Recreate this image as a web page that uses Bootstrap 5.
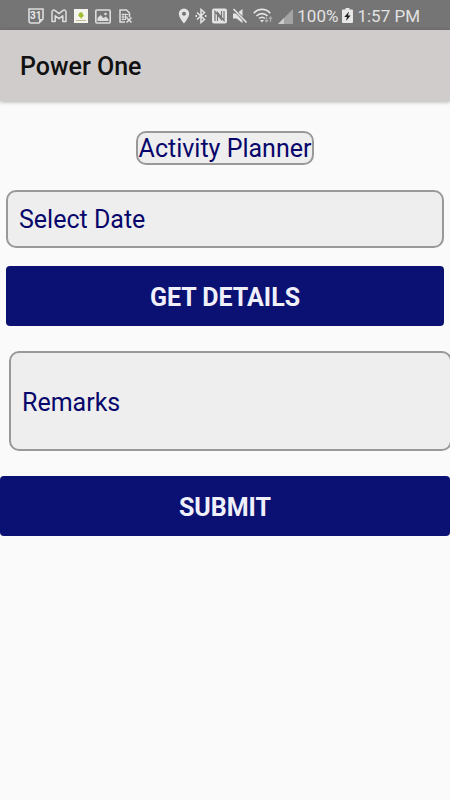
<!DOCTYPE html>
<html lang="en">
<head>
<meta charset="utf-8">
<meta name="viewport" content="width=device-width, initial-scale=1">
<title>Power One</title>
<link href="https://cdn.jsdelivr.net/npm/bootstrap@5.3.0/dist/css/bootstrap.min.css" rel="stylesheet">
<style>
body { font-family: Roboto, "Liberation Sans", sans-serif; background: #fafafa; overflow-x: hidden; }
.status-bar { height: 30px; background: #757575; color: #e2e2e2; padding: 2px 30px 0 28px; font-size: 17px; line-height: 28px; }
.status-bar svg { display: block; flex: none; }
.notices { gap: 7px; }
.system { gap: 5px; }
.readout { gap: 4px; }
.app-bar { height: 71px; background: #d0cccb; padding: 2px 20px 0; box-shadow: 0 1px 4px rgba(0,0,0,.3); }
.app-title { font-size: 25px; font-weight: 500; line-height: 32px; color: #111; }
.planner { padding-top: 30px; }
.outlined, .outlined:focus { border: 2px solid #999; border-radius: 10px; background: #eee; color: #07076b; font-size: 25px; }
.outlined::placeholder { color: #07076b; opacity: 1; }
.heading-tag { line-height: 28px; padding: 2px 1px 0; margin-bottom: 25px; }
.inset { margin: 0 6px; }
.date-box { height: 58px; padding: 0 11px; }
.remarks-wrap { margin: 25px -2px 25px 9px; }
.remarks-box { height: 100px; padding: 2px 11px 0; }
.action, .action:hover { height: 60px; border: 0; border-radius: 4px; background: #0a1172; color: #f0f0fb; font-size: 25px; font-weight: 700; padding: 4px 12px 0; }
.action-top { margin-top: 18px; }
</style>
</head>
<body>
<div class="status-bar d-flex justify-content-between align-items-center">
  <div class="notices d-flex align-items-center">
    <svg width="16" height="16" viewBox="0 0 16 16"><path d="M1 1h14v10l-4 4H3a2 2 0 0 1-2-2z" fill="none" stroke="#ddd" stroke-width="1.6"/><path d="M11 15v-4h4z" fill="#ddd"/><text x="7.700" y="11.300" font-size="10" font-weight="700" text-anchor="middle" fill="#e8e8e8">31</text></svg>
    <svg width="16" height="16" viewBox="0 0 16 16" fill="none" stroke="#ddd" stroke-width="1.500" stroke-linejoin="round"><path d="M1 13.500V4c0-2 2-2.400 3.200-1.300L8 5.700l3.800-3C13 1.600 15 2 15 4v9.500h-3.200V7.800L8 10.700 4.200 7.800v5.700z"/></svg>
    <svg width="14" height="14" viewBox="0 0 14 14"><rect width="14" height="14" fill="#f5f5ef"/><path d="M5 4.500C6 2.500 9 3 9 5.500c1.500 1 .5 2.500-1 2.500v1.500H6.500V8C4 8 4 5.500 5 4.500z" fill="#a1bd32"/><path d="M2 11.500h10" stroke="#c5b995"/></svg>
    <svg width="16" height="15" viewBox="0 0 16 15"><rect x=".8" y="1" width="14.400" height="13" rx="1" fill="none" stroke="#ddd" stroke-width="1.600"/><path d="M2.500 12V9l3-3 3 3 2.500-1.500 2.500 3V12z" fill="#ddd"/><circle cx="10.500" cy="5" r="1.300" fill="#ddd"/></svg>
    <svg width="15" height="16" viewBox="0 0 15 16" fill="none" stroke="#ddd"><path d="M7 14H2V2h6.500L11.500 5v4" stroke-width="1.500"/><path d="M3.500 6.500h7M3.500 9h6M3.500 11.500h4M5 5.500V12M7.500 5.500V12"/><path d="m8.500 9.500 5 5m0-5-5 5" stroke-width="1.600"/></svg>
  </div>
  <div class="system d-flex align-items-center">
    <svg width="12" height="16" viewBox="0 0 12 16"><path fill-rule="evenodd" d="M6 .5a5.200 5.200 0 0 0-5.200 5.200C.8 9.500 6 15.500 6 15.500s5.200-6 5.200-9.800A5.200 5.200 0 0 0 6 .5zm0 3.200a2 2 0 1 1 0 4 2 2 0 0 1 0-4z" fill="#e4e4e4"/></svg>
    <svg width="12" height="16" viewBox="0 0 12 16" fill="none" stroke="#e4e4e4" stroke-width="1.500"><path d="m2 4.500 7.500 7L6 14.500v-13l3.500 3L2 11.500"/><path d="M.5 8H2m8 0h1.500" stroke-width="1.800"/></svg>
    <svg width="15" height="16" viewBox="0 0 15 16"><rect y=".5" width="15" height="15" rx="2" fill="#e4e4e4"/><path d="M3 13V3.500l6.500 8V3M12 3v9.500L5.500 4.500V13" fill="none" stroke="#757575" stroke-width="1.200"/></svg>
    <svg width="16" height="16" viewBox="0 0 16 16"><path d="M1 5.500h3.500l6-4.500v14l-6-4.500H1z" fill="#e4e4e4"/><path d="m1 .5 14 14.500" stroke="#757575" stroke-width="3"/><path d="m1.500 1 13 13.500" stroke="#e4e4e4" stroke-width="1.600"/></svg>
    <svg width="20" height="16" viewBox="0 0 20 16" fill="none" stroke="#e4e4e4" stroke-width="1.700"><path d="M.8 5.200c4.500-5 11.900-5 16.400 0M3.500 8c3-3.300 8-3.300 11 0M6.200 10.500c1.600-1.700 4-1.700 5.600 0"/><path d="m7 12 2 2.500 2-2.500z" fill="#e4e4e4" stroke="none"/><path d="M13.500 9v5m-1.500-1.800 1.500 1.800 1.500-1.800M17.500 14V9M16 10.800 17.500 9l1.500 1.800" stroke="#aaa" stroke-width="1.200"/></svg>
    <div class="readout d-flex align-items-center">
      <svg width="15" height="15" viewBox="0 0 15 15"><path d="M15 0v15H0z" fill="#a4a4a4"/><path d="M6 9v6H0z" fill="#ccc"/></svg>
      <span>100%</span>
      <svg width="11" height="16" viewBox="0 0 11 16"><path d="M3.500 0h4v1.500H10a1 1 0 0 1 1 1V14a1 1 0 0 1-1 1H1a1 1 0 0 1-1-1V2.500a1 1 0 0 1 1-1h2.500z" fill="#e8e8e8"/><path d="M7 3.500 2.300 9H5l-1 4L8.700 7.500H6z" fill="#222"/></svg>
      <span>1:57 PM</span>
    </div>
  </div>
</div>
<header class="app-bar d-flex align-items-center">
  <h1 class="app-title m-0">Power One</h1>
</header>
<main>
  <form class="planner d-flex flex-column">
    <h2 class="outlined heading-tag fw-normal align-self-center mt-0">Activity Planner</h2>
    <div class="inset d-flex flex-column">
      <input class="form-control outlined date-box" type="text" placeholder="Select Date" aria-label="Select Date">
      <button class="btn action action-top w-100" type="button">GET DETAILS</button>
    </div>
    <div class="remarks-wrap">
      <input class="form-control outlined remarks-box" type="text" placeholder="Remarks" aria-label="Remarks">
    </div>
    <button class="btn action w-100" type="submit">SUBMIT</button>
  </form>
</main>
<script src="https://cdn.jsdelivr.net/npm/bootstrap@5.3.0/dist/js/bootstrap.bundle.min.js"></script>
</body>
</html>
